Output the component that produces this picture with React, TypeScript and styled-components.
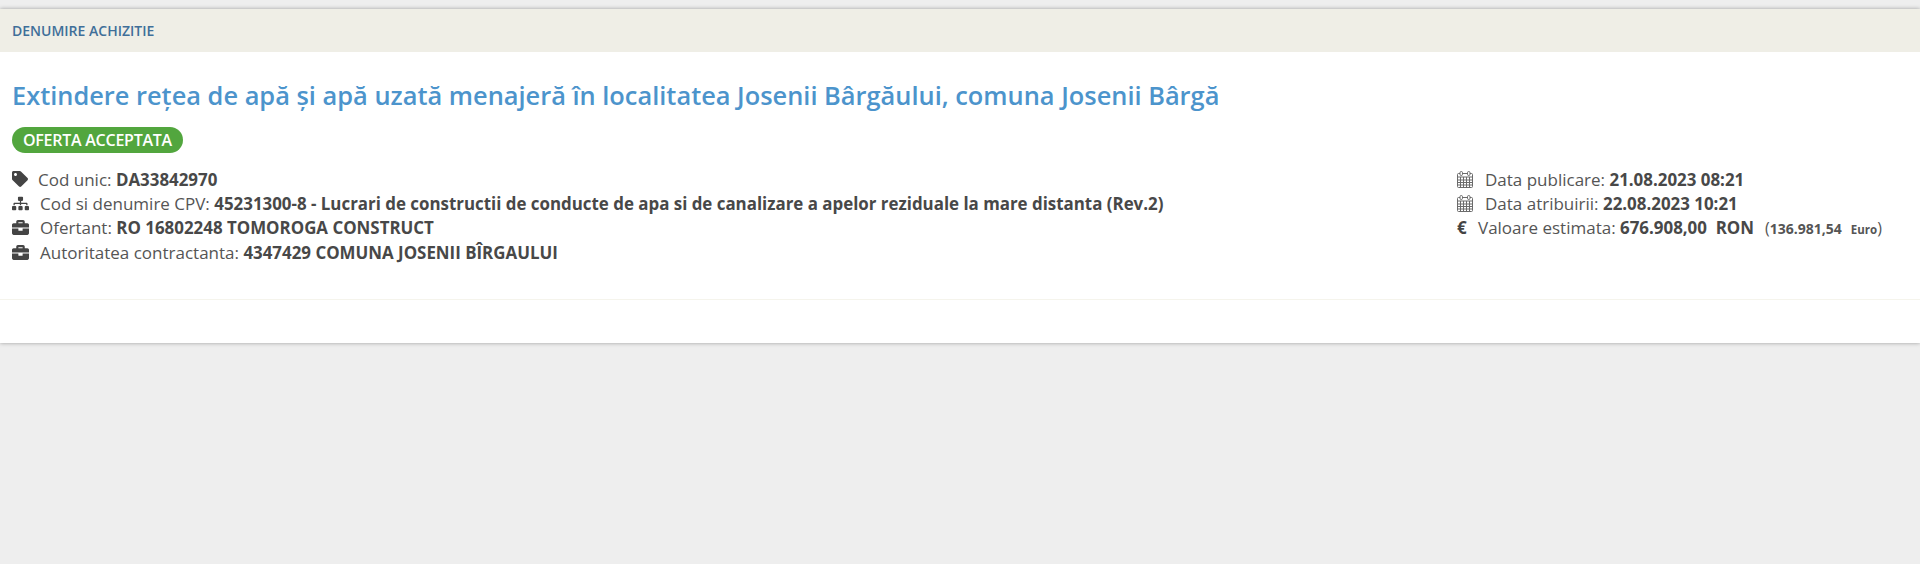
import { FaBriefcase, FaSitemap, FaTag } from "react-icons/fa";
import styled, { createGlobalStyle } from "styled-components";

const GlobalStyle = createGlobalStyle`
  html, body {
    margin: 0;
    padding: 0;
    background-color: #eeeeee;
    font-family: "Open Sans", "Noto Sans", sans-serif;
    color: #555555;
  }
`;

const Page = styled.div`
  padding-top: 9px;
  height: 555px;
`;

const Card = styled.section`
  background-color: #ffffff;
  box-shadow: 0 0 4px rgba(0, 0, 0, 0.35);
`;

const CardHeader = styled.header`
  display: flex;
  align-items: center;
  height: 43px;
  padding-left: 12px;
  background-color: #efeee6;
  color: #3f6f99;
  font-size: 14px;
  font-weight: 600;
`;

const CardBody = styled.div`
  padding: 26px 12px 0;
  height: 248px;
  box-sizing: border-box;
  border-bottom: 1px solid #f5f4ec;
`;

const CardFooter = styled.div`
  height: 43px;
`;

const Title = styled.h1`
  margin: 0;
  color: #4c94cc;
  font-size: 25.4px;
  line-height: 34px;
  font-weight: 600;
`;

const Status = styled.span`
  display: inline-block;
  margin-top: 15px;
  padding: 0 11px;
  height: 26px;
  line-height: 26px;
  border-radius: 13px;
  background-color: #52a63e;
  color: #ffffff;
  font-size: 16px;
  font-weight: 600;
  letter-spacing: -0.25px;
`;

const Columns = styled.div`
  display: flex;
  justify-content: space-between;
  margin-top: 14px;
`;

const LeftList = styled.ul`
  margin: 0;
  padding: 0;
  list-style: none;
`;

const RightList = styled(LeftList)`
  width: 451px;
`;

const Row = styled.li`
  display: flex;
  align-items: center;
  height: 24.4px;
  font-size: 17px;
  white-space: pre;
`;

const IconSlot = styled.span<{ $width: number }>`
  display: inline-flex;
  align-items: center;
  width: ${(props) => props.$width}px;
  color: #444444;
  font-weight: 700;
  flex-shrink: 0;
`;

const Strong = styled.b`
  font-size: 16.9px;
  font-weight: 700;
  color: #484848;
`;

const Small = styled.span`
  margin-left: 11px;
  font-size: 14px;
  font-weight: 700;
  color: #555555;
`;

const Tiny = styled.span`
  margin-left: 9px;
  font-size: 11.5px;
`;

const Paren = styled.span`
  font-size: 16px;
  font-weight: 400;
`;

function CalendarIcon() {
  return (
    <svg width="16" height="17" viewBox="0 0 16 17" fill="none" stroke="#6b6b6b" strokeWidth="1">
      <rect x="0.5" y="2.5" width="15" height="14" rx="1" />
      <path d="M0.5 6h15M0.5 9h15M0.5 11.5h15M0.5 14h15M3.5 6v10.5M6.5 6v10.5M9.5 6v10.5M12.5 6v10.5" />
      <rect x="3" y="0.5" width="2.5" height="4" rx="1.2" fill="#ffffff" />
      <rect x="10.5" y="0.5" width="2.5" height="4" rx="1.2" fill="#ffffff" />
    </svg>
  );
}

export default function App() {
  return (
    <Page>
      <GlobalStyle />
      <Card>
        <CardHeader>DENUMIRE ACHIZITIE</CardHeader>
        <CardBody>
          <Title>Extindere rețea de apă și apă uzată menajeră în localitatea Josenii Bârgăului, comuna Josenii Bârgă</Title>
          <Status>OFERTA ACCEPTATA</Status>
          <Columns>
            <LeftList>
              <Row>
                <IconSlot $width={26}><FaTag size={16} /></IconSlot>
                Cod unic: <Strong>DA33842970</Strong>
              </Row>
              <Row>
                <IconSlot $width={28}><FaSitemap size={17} /></IconSlot>
                Cod si denumire CPV: <Strong>45231300-8 - Lucrari de constructii de conducte de apa si de canalizare a apelor reziduale la mare distanta (Rev.2)</Strong>
              </Row>
              <Row>
                <IconSlot $width={28}><FaBriefcase size={17} /></IconSlot>
                Ofertant: <Strong>RO 16802248 TOMOROGA CONSTRUCT</Strong>
              </Row>
              <Row>
                <IconSlot $width={28}><FaBriefcase size={17} /></IconSlot>
                Autoritatea contractanta: <Strong>4347429 COMUNA JOSENII BÎRGAULUI</Strong>
              </Row>
            </LeftList>
            <RightList>
              <Row>
                <IconSlot $width={28}><CalendarIcon /></IconSlot>
                Data publicare: <Strong>21.08.2023 08:21</Strong>
              </Row>
              <Row>
                <IconSlot $width={28}><CalendarIcon /></IconSlot>
                Data atribuirii: <Strong>22.08.2023 10:21</Strong>
              </Row>
              <Row>
                <IconSlot $width={21}>€</IconSlot>
                Valoare estimata: <Strong>676.908,00  RON</Strong>
                <Small><Paren>(</Paren>136.981,54<Tiny>Euro</Tiny><Paren>)</Paren></Small>
              </Row>
            </RightList>
          </Columns>
        </CardBody>
        <CardFooter />
      </Card>
    </Page>
  );
}
